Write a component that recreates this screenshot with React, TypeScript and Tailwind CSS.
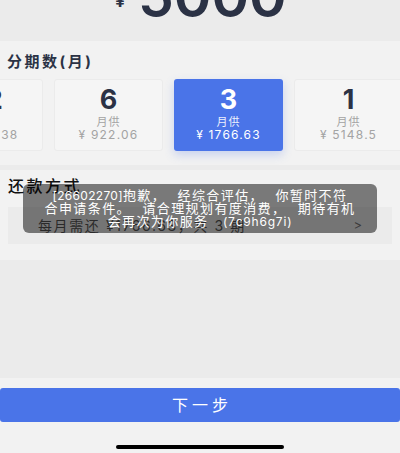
const cards = [
  { n: '12', price: '¥ 498.38' },
  { n: '6', price: '¥ 922.06' },
  { n: '3', price: '¥ 1766.63', active: true },
  { n: '1', price: '¥ 5148.5' },
]

const font = { fontFamily: 'Inter, "Noto Sans CJK SC", "Noto Sans", sans-serif' }

export default function App() {
  return (
    <div className="relative w-[400px] h-[453px] overflow-hidden bg-[#ebebeb]" style={font}>
      {/* amount */}
      <div className="h-[41px] overflow-hidden flex justify-center bg-[#ebebeb]">
        <div className="flex items-start mt-[-32px] ml-[2px]">
          <span className="text-[17px] font-bold text-[#2b3245] mt-[25px] mr-[13px] leading-none">¥</span>
          <span className="text-[57px] font-semibold text-[#2b3245] leading-none">5000</span>
        </div>
      </div>

      {/* installments */}
      <div className="bg-[#f2f2f2] h-[124px] pt-[13px] overflow-hidden">
        <div className="px-[7px] text-[15px] font-bold text-[#2b3245] leading-[16px] tracking-[2.5px]">分期数(月)</div>
        <div className="flex gap-[11px] ml-[-66px] mt-[9px]">
          {cards.map((c) =>
            c.active ? (
              <div
                key={c.n}
                className="w-[109px] h-[72px] shrink-0 rounded-[3px] bg-[#4a74e8] shadow-[0_4px_10px_rgba(74,116,232,0.25)] flex flex-col items-center pt-[6px] text-white"
              >
                <div className="text-[27px] font-bold leading-[30px]">{c.n}</div>
                <div className="text-[11px] leading-[13px] mt-[1px] tracking-[1px] opacity-90">月供</div>
                <div className="text-[12px] leading-[12px] tracking-[1.2px]">{c.price}</div>
              </div>
            ) : (
              <div
                key={c.n}
                className="w-[109px] h-[72px] shrink-0 rounded-[3px] bg-[#f5f5f5] border border-[#ebebeb] flex flex-col items-center pt-[5px]"
              >
                <div className="text-[27px] font-bold leading-[30px] text-[#2b3245]">{c.n}</div>
                <div className="text-[11px] leading-[13px] mt-[1px] tracking-[1px] text-[#a3a3a3]">月供</div>
                <div className="text-[12px] leading-[12px] tracking-[1.2px] text-[#a3a3a3]">{c.price}</div>
              </div>
            )
          )}
        </div>
      </div>

      <div className="h-[5px] bg-[#ebebeb]" />

      {/* repayment */}
      <div className="bg-[#f2f2f2] h-[90px] pt-[8px] px-[8px]">
        <div className="text-[16px] leading-[16px] font-medium text-[#111] tracking-[2.5px]">还款方式</div>
        <div className="mt-[13px] h-[37px] bg-[#ebebeb] flex items-center justify-between pl-[30px] pr-[30px]">
          <span className="text-[14px] text-[#555] tracking-[1.6px]">每月需还 ¥1766.63，共 3 期</span>
          <span className="text-[13px] text-[#777]">&gt;</span>
        </div>
      </div>

      <div className="h-[118px] bg-[#ebebeb]" />

      {/* footer */}
      <div className="bg-[#f2f2f2] h-[75px] pt-[10px] flex flex-col items-center">
        <button className="w-full h-[34px] rounded-[3px] bg-[#4a74e8] text-white text-[16px] tracking-[4px] pl-[4px] flex items-center justify-center">
          下一步
        </button>
        <div className="mt-[23px] w-[168px] h-[4px] rounded-full bg-black" />
      </div>

      {/* toast */}
      <div className="absolute left-[23px] top-[184px] w-[354px] h-[49px] rounded-[6px] bg-black/50 text-white text-[13px] leading-[12.5px] tracking-[1.4px] flex flex-col items-center justify-center">
        <div>
          <span className="text-[12px] tracking-[0.3px]">[26602270]</span>抱歉，&#8194;&#8198;经综合评估，&#8194;&#8198;你暂时不符
        </div>
        <div>合申请条件。&#8194;&#8198;请合理规划有度消费，&#8194;&#8198;期待有机</div>
        <div>
          会再次为你服务&#8195;<span className="text-[12px] tracking-[0.8px]">(7c9h6g7i)</span>
        </div>
      </div>
    </div>
  )
}
